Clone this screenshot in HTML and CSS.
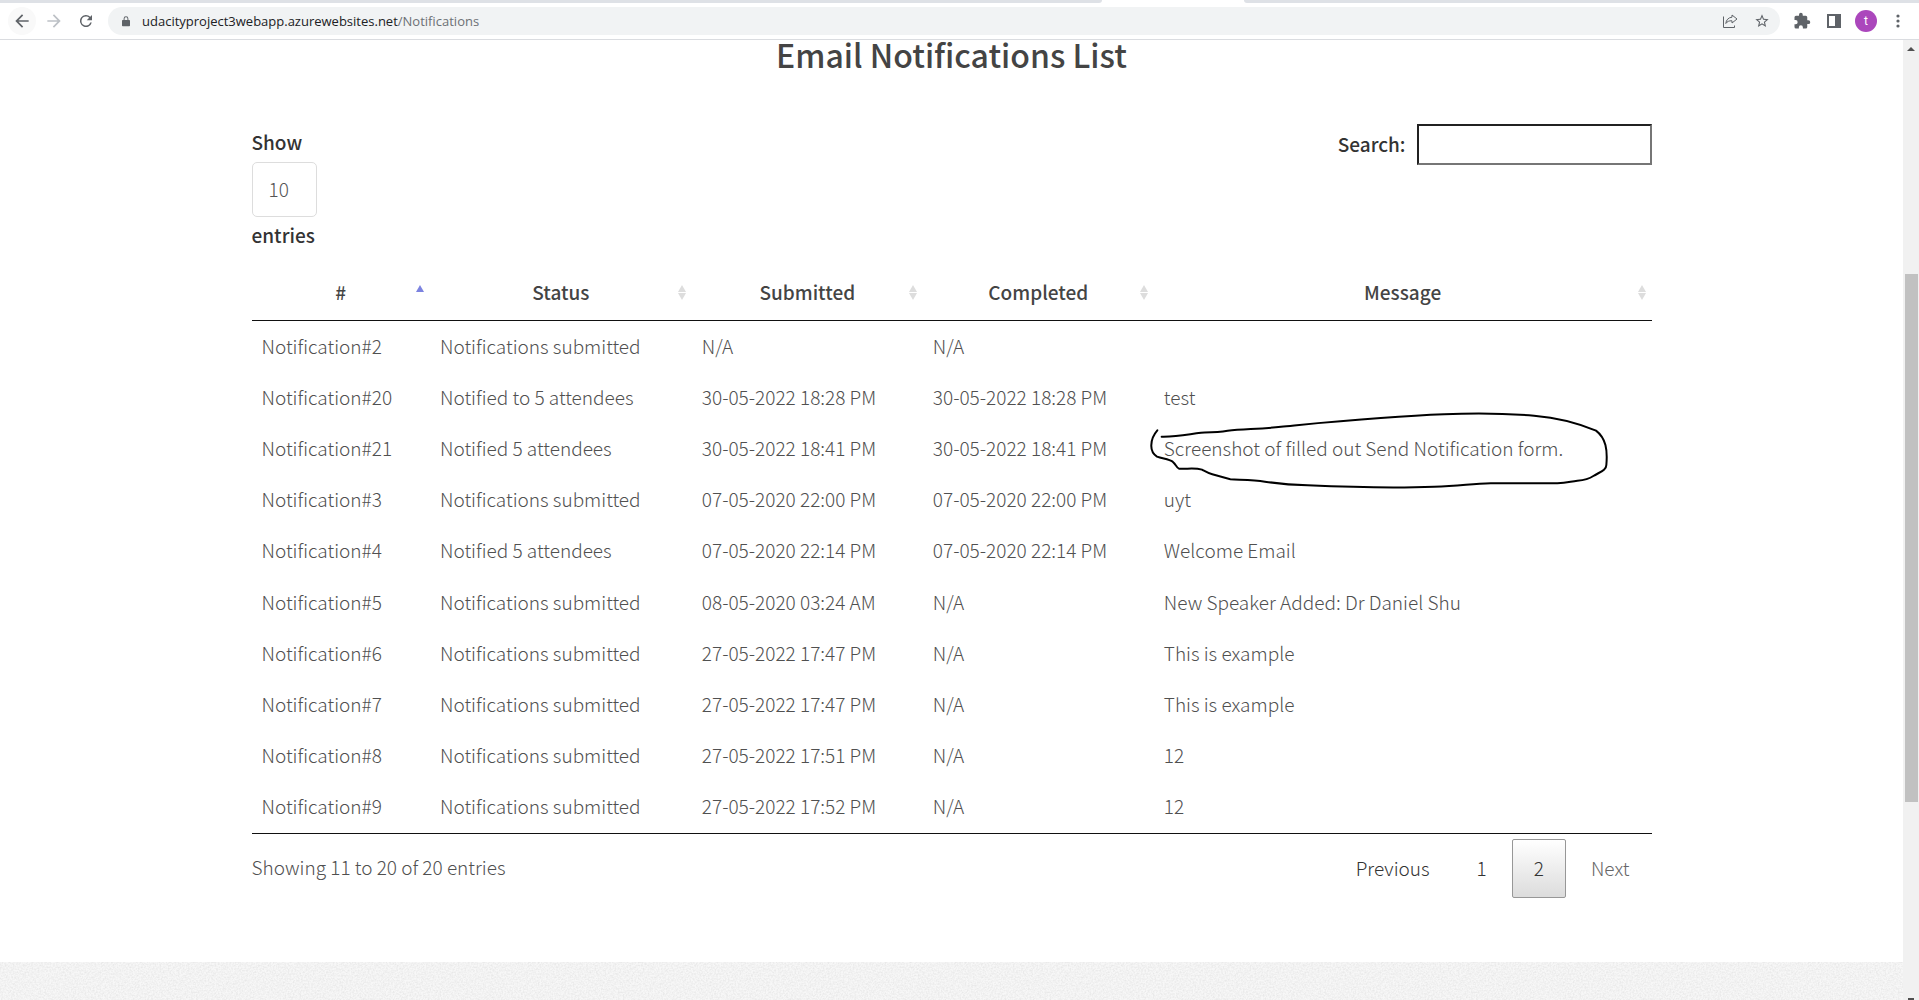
FILE: index.html
```html
<!DOCTYPE html>
<html lang="en">
<head>
<meta charset="utf-8">
<title>Email Notifications List</title>
<link rel="stylesheet" href="styles.css">
</head>
<body>
<header class="browser">
  <div class="tabs"><span class="tab-left"></span><span class="tab-right"></span></div>
  <div class="toolbar">
    <button class="tool back" aria-label="Back"><svg viewBox="0 0 24 24"><path d="M20 11H7.83l5.59-5.59L12 4l-8 8 8 8 1.41-1.41L7.83 13H20z"/></svg></button>
    <button class="tool forward" aria-label="Forward"><svg viewBox="0 0 24 24"><path d="M12 4l-1.41 1.41L16.17 11H4v2h12.17l-5.58 5.59L12 20l8-8z"/></svg></button>
    <button class="tool" aria-label="Reload"><svg viewBox="0 0 24 24"><path d="M17.65 6.35A8 8 0 1 0 19.73 14h-2.08A6 6 0 1 1 12 6c1.66 0 3.14.69 4.22 1.78L13 11h7V4z"/></svg></button>
    <div class="address">
      <svg class="lock" viewBox="0 0 10 14"><path d="M1 5h1V3.500a3 3 0 0 1 6 0V5h1a1 1 0 0 1 1 1v6a1 1 0 0 1-1 1H1a1 1 0 0 1-1-1V6a1 1 0 0 1 1-1zm2.200 0h3.600V3.500a1.800 1.800 0 0 0-3.600 0z"/></svg>
      <span class="url">udacityproject3webapp.azurewebsites.net<span class="path">/Notifications</span></span>
      <button class="tool small" aria-label="Share"><svg viewBox="0 0 16 16" fill="none" stroke="#5f6368"><path d="M1.500 3.500v11h11v-2M10 2l5 4-5 4V7.800C7 7.600 5.200 8.500 3.800 10.500 4.200 7 6.300 4.500 10 4.200z"/></svg></button>
      <button class="tool small" aria-label="Bookmark"><svg viewBox="0 0 24 24"><path d="M22 9.240l-7.190-.62L12 2 9.190 8.630 2 9.240l5.460 4.730L5.820 21 12 17.270 18.180 21l-1.630-7.030zM12 15.400l-3.760 2.270 1-4.280-3.320-2.880 4.380-.38L12 6.100l1.710 4.040 4.380.38-3.320 2.880 1 4.280z"/></svg></button>
    </div>
    <div class="actions">
      <button class="tool" aria-label="Extensions"><svg viewBox="0 0 24 24"><path d="M20.500 11H19V7a2 2 0 0 0-2-2h-4V3.500a2.500 2.500 0 0 0-5 0V5H4a2 2 0 0 0-2 2v3.800h1.500a2.700 2.700 0 0 1 0 5.400H2V20a2 2 0 0 0 2 2h3.800v-1.500a2.700 2.700 0 0 1 5.400 0V22H17a2 2 0 0 0 2-2v-4h1.500a2.500 2.500 0 0 0 0-5z"/></svg></button>
      <button class="tool" aria-label="Side panel"><svg viewBox="0 0 18 18"><path d="M2 2h14v14H2zm2 2v10h6V4z" fill-rule="evenodd"/></svg></button>
      <button class="avatar" aria-label="Profile">t</button>
      <button class="tool" aria-label="Menu"><svg viewBox="0 0 18 18"><circle cx="9" cy="4" r="1.600"/><circle cx="9" cy="9" r="1.600"/><circle cx="9" cy="14" r="1.600"/></svg></button>
    </div>
  </div>
</header>
<div class="viewport">
  <div class="page">
    <main class="content">
      <h1>Email Notifications List</h1>
      <div class="controls">
        <div class="length">
          <label for="length">Show</label>
          <select id="length"><option>10</option></select>
          <label for="length">entries</label>
        </div>
        <div class="filter">
          <label for="search">Search:</label>
          <input id="search" type="search">
        </div>
      </div>
      <table>
        <colgroup><col class="c-id"><col class="c-status"><col class="c-date"><col class="c-date"><col></colgroup>
        <thead>
          <tr><th class="asc">#</th><th>Status</th><th>Submitted</th><th>Completed</th><th>Message</th></tr>
        </thead>
        <tbody>
          <tr><td>Notification#2</td><td>Notifications submitted</td><td>N/A</td><td>N/A</td><td></td></tr>
          <tr><td>Notification#20</td><td>Notified to 5 attendees</td><td>30-05-2022 18:28 PM</td><td>30-05-2022 18:28 PM</td><td>test</td></tr>
          <tr><td>Notification#21</td><td>Notified 5 attendees</td><td>30-05-2022 18:41 PM</td><td>30-05-2022 18:41 PM</td><td class="marked">Screenshot of filled out Send Notification form.<svg class="ink" viewBox="72 54 1417 270" preserveAspectRatio="none"><path d="M109 121C97 135 91 150 91 165C90 182 96 192 108 200C125 206 145 208 155 215C166 224 166 233 174 236C195 238 220 232 243 239C256 246 262 250 274 253L328 268C370 270 400 270 432 275C480 282 500 284 560 286C700 292 840 294 940 290C1020 288 1050 281 1110 280H1310C1340 279 1350 274 1370 272C1396 270 1405 267 1418 258C1440 245 1457 240 1457 225C1461 180 1456 145 1426 122C1370 98 1300 82 1240 77C1140 69 1050 69 970 73C800 79 640 95 480 110C420 118 370 116 320 122C290 127 270 127 240 128C200 133 170 141 122 140"/></svg></td></tr>
          <tr><td>Notification#3</td><td>Notifications submitted</td><td>07-05-2020 22:00 PM</td><td>07-05-2020 22:00 PM</td><td>uyt</td></tr>
          <tr><td>Notification#4</td><td>Notified 5 attendees</td><td>07-05-2020 22:14 PM</td><td>07-05-2020 22:14 PM</td><td>Welcome Email</td></tr>
          <tr><td>Notification#5</td><td>Notifications submitted</td><td>08-05-2020 03:24 AM</td><td>N/A</td><td>New Speaker Added: Dr Daniel Shu</td></tr>
          <tr><td>Notification#6</td><td>Notifications submitted</td><td>27-05-2022 17:47 PM</td><td>N/A</td><td>This is example</td></tr>
          <tr><td>Notification#7</td><td>Notifications submitted</td><td>27-05-2022 17:47 PM</td><td>N/A</td><td>This is example</td></tr>
          <tr><td>Notification#8</td><td>Notifications submitted</td><td>27-05-2022 17:51 PM</td><td>N/A</td><td>12</td></tr>
          <tr><td>Notification#9</td><td>Notifications submitted</td><td>27-05-2022 17:52 PM</td><td>N/A</td><td>12</td></tr>
        </tbody>
      </table>
      <div class="summary">
        <p>Showing 11 to 20 of 20 entries</p>
        <nav class="pages" aria-label="Pages">
          <a href="#">Previous</a>
          <a href="#">1</a>
          <a href="#" class="current">2</a>
          <a href="#" class="disabled">Next</a>
        </nav>
      </div>
    </main>
    <footer class="footer">
      <svg class="grain" aria-hidden="true"><filter id="grain" x="0" y="0" width="100%" height="100%"><feTurbulence type="fractalNoise" baseFrequency="0.600" numOctaves="2"/><feColorMatrix values="0 0 0 0 0  0 0 0 0 0  0 0 0 0 0  0.120 0 0 0 -0.040"/></filter><rect width="100%" height="100%" filter="url(#grain)"/></svg>
    </footer>
  </div>
  <div class="scrollbar" aria-hidden="true">
    <span class="arrow-up"></span>
    <span class="track-top"></span>
    <span class="thumb"></span>
    <span class="track-bottom"></span>
    <span class="arrow-down"></span>
  </div>
</div>
</body>
</html>
```
FILE: styles.css
```css
* { box-sizing: border-box; }

body {
  display: flex;
  flex-direction: column;
  height: 100vh;
  margin: 0;
  overflow: hidden;
  background: #fff;
  color: #505050;
  font: 300 19px/31px "Noto Sans CJK SC Light", "Noto Sans CJK SC", sans-serif;
}

button { padding: 0; border: 0; background: none; }

/* browser bar */
.browser { flex: none; border-bottom: 1px solid #dadce0; }
.tabs { display: flex; justify-content: space-between; height: 3px; }
.tabs span { background: #dee1e6; }
.tab-left { width: 57.400%; border-bottom-right-radius: 3px; }
.tab-right { width: 35.200%; border-bottom-left-radius: 3px; }
.toolbar { display: flex; align-items: center; height: 36px; padding: 0 10px 0 8px; }
.tool {
  display: flex;
  flex: none;
  align-items: center;
  justify-content: center;
  width: 32px;
  height: 28px;
  border-radius: 14px;
}
.tool svg { width: 18px; height: 18px; fill: #5f6368; }
.tool.small svg { width: 16px; height: 16px; }
.tool[aria-label="Share"] svg { fill: none; }
.back { width: 28px; background: #f9f9f9; }
.forward { margin-left: 2px; }
.forward svg { fill: #bdc1c6; }
.back svg, .forward svg { width: 20px; height: 20px; }
.address {
  display: flex;
  flex: 1;
  align-items: center;
  height: 28px;
  margin-left: 6px;
  padding: 0 2px 0 14px;
  border-radius: 14px;
  background: #f1f3f4;
}
.lock { width: 8px; height: 13px; margin-right: 12px; fill: #5f6368; }
.url { flex: 1; color: #202124; font: 13px/28px "Open Sans", sans-serif; }
.path { color: #6c7075; }
.actions { display: flex; align-items: center; margin-left: 6px; }
.actions .tool:last-child { width: 22px; }
.avatar {
  width: 22px;
  height: 22px;
  margin: 0 10px 0 5px;
  border-radius: 11px;
  background: #ab47bc;
  color: #fff;
  font: 12px/22px Roboto, sans-serif;
}

/* page */
.viewport { display: flex; flex: 1; min-height: 0; }
.page { display: flex; flex: 1; flex-direction: column; }
.content { width: 100%; max-width: 1432px; margin: 0 auto; padding: 0 16px 64px; }
h1, label, th { color: #444; font-family: "Noto Sans CJK SC", sans-serif; font-weight: 500; }
h1 { margin: 0 0 56px; font-size: 32px; line-height: 28px; text-align: center; }

.controls { display: flex; justify-content: space-between; align-items: flex-start; margin-bottom: 11px; }
label { color: #333; }
.length { display: flex; flex-direction: column; align-items: flex-start; line-height: 36px; }
.length label { margin-bottom: 2px; }
select {
  width: 65px;
  height: 55px;
  padding: 0 16px 2px;
  border: 1px solid #ddd;
  border-radius: 5px;
  background: #fff;
  color: #555;
  font: inherit;
  appearance: none;
}
.filter { display: flex; align-items: center; gap: 11px; }
.filter label { padding-bottom: 2px; }
input {
  width: 235px;
  height: 41px;
  border: 2px inset #767676;
  border-radius: 0;
  background: #fff;
  font: inherit;
  appearance: none;
}

table { width: 100%; border-spacing: 0; border-bottom: 1px solid #111; table-layout: fixed; }
.c-id { width: 12.750%; }
.c-status { width: 18.700%; }
.c-date { width: 16.500%; }
th { position: relative; padding: 10px 18px 13px; border-bottom: 1px solid #111; }
th::before, th::after {
  position: absolute;
  right: 6px;
  border: solid transparent;
  border-width: 0 4px;
  content: "";
}
th::before { top: 19px; border-bottom: 7px solid #ddd; }
th::after { top: 27px; border-top: 7px solid #ddd; }
th.asc::before { border-bottom-color: #7c83e0; }
th.asc::after { display: none; }
td { padding: 9px 10px 11px; white-space: nowrap; }
tr:nth-child(5n) td { padding-bottom: 12px; }
.marked { position: relative; }
.ink {
  position: absolute;
  top: -15px;
  left: -9px;
  width: 472px;
  height: 90px;
  fill: none;
  stroke: #000;
  stroke-width: 6;
  stroke-linecap: round;
}

.summary { display: flex; justify-content: space-between; align-items: center; padding-top: 5px; }
.summary p { margin: 0; padding-bottom: 4px; }
.pages { display: flex; gap: 3px; }
.pages a {
  padding: 12px 21px 14px;
  border: 1px solid transparent;
  border-radius: 2px;
  color: #333;
  text-decoration: none;
}
.pages .current { border-color: #979797; background: linear-gradient(#fff, #dcdcdc); }
.pages .disabled { color: #666; }

.footer { flex: 1; min-height: 0; overflow: hidden; background: #f7f7f7; }
.grain { display: block; width: 100%; height: 100%; }

.scrollbar { display: flex; flex: none; flex-direction: column; align-items: center; width: 16px; padding-top: 7px; background: #f1f1f1; }
.arrow-up { border: 4px solid transparent; border-top: 0; border-bottom-color: #505050; }
.arrow-down { height: 2px; width: 6px; background: #505050; }
.track-top { flex: 223; }
.thumb { flex: 528; width: 13px; background: #c1c1c1; }
.track-bottom { flex: 196; }
```
